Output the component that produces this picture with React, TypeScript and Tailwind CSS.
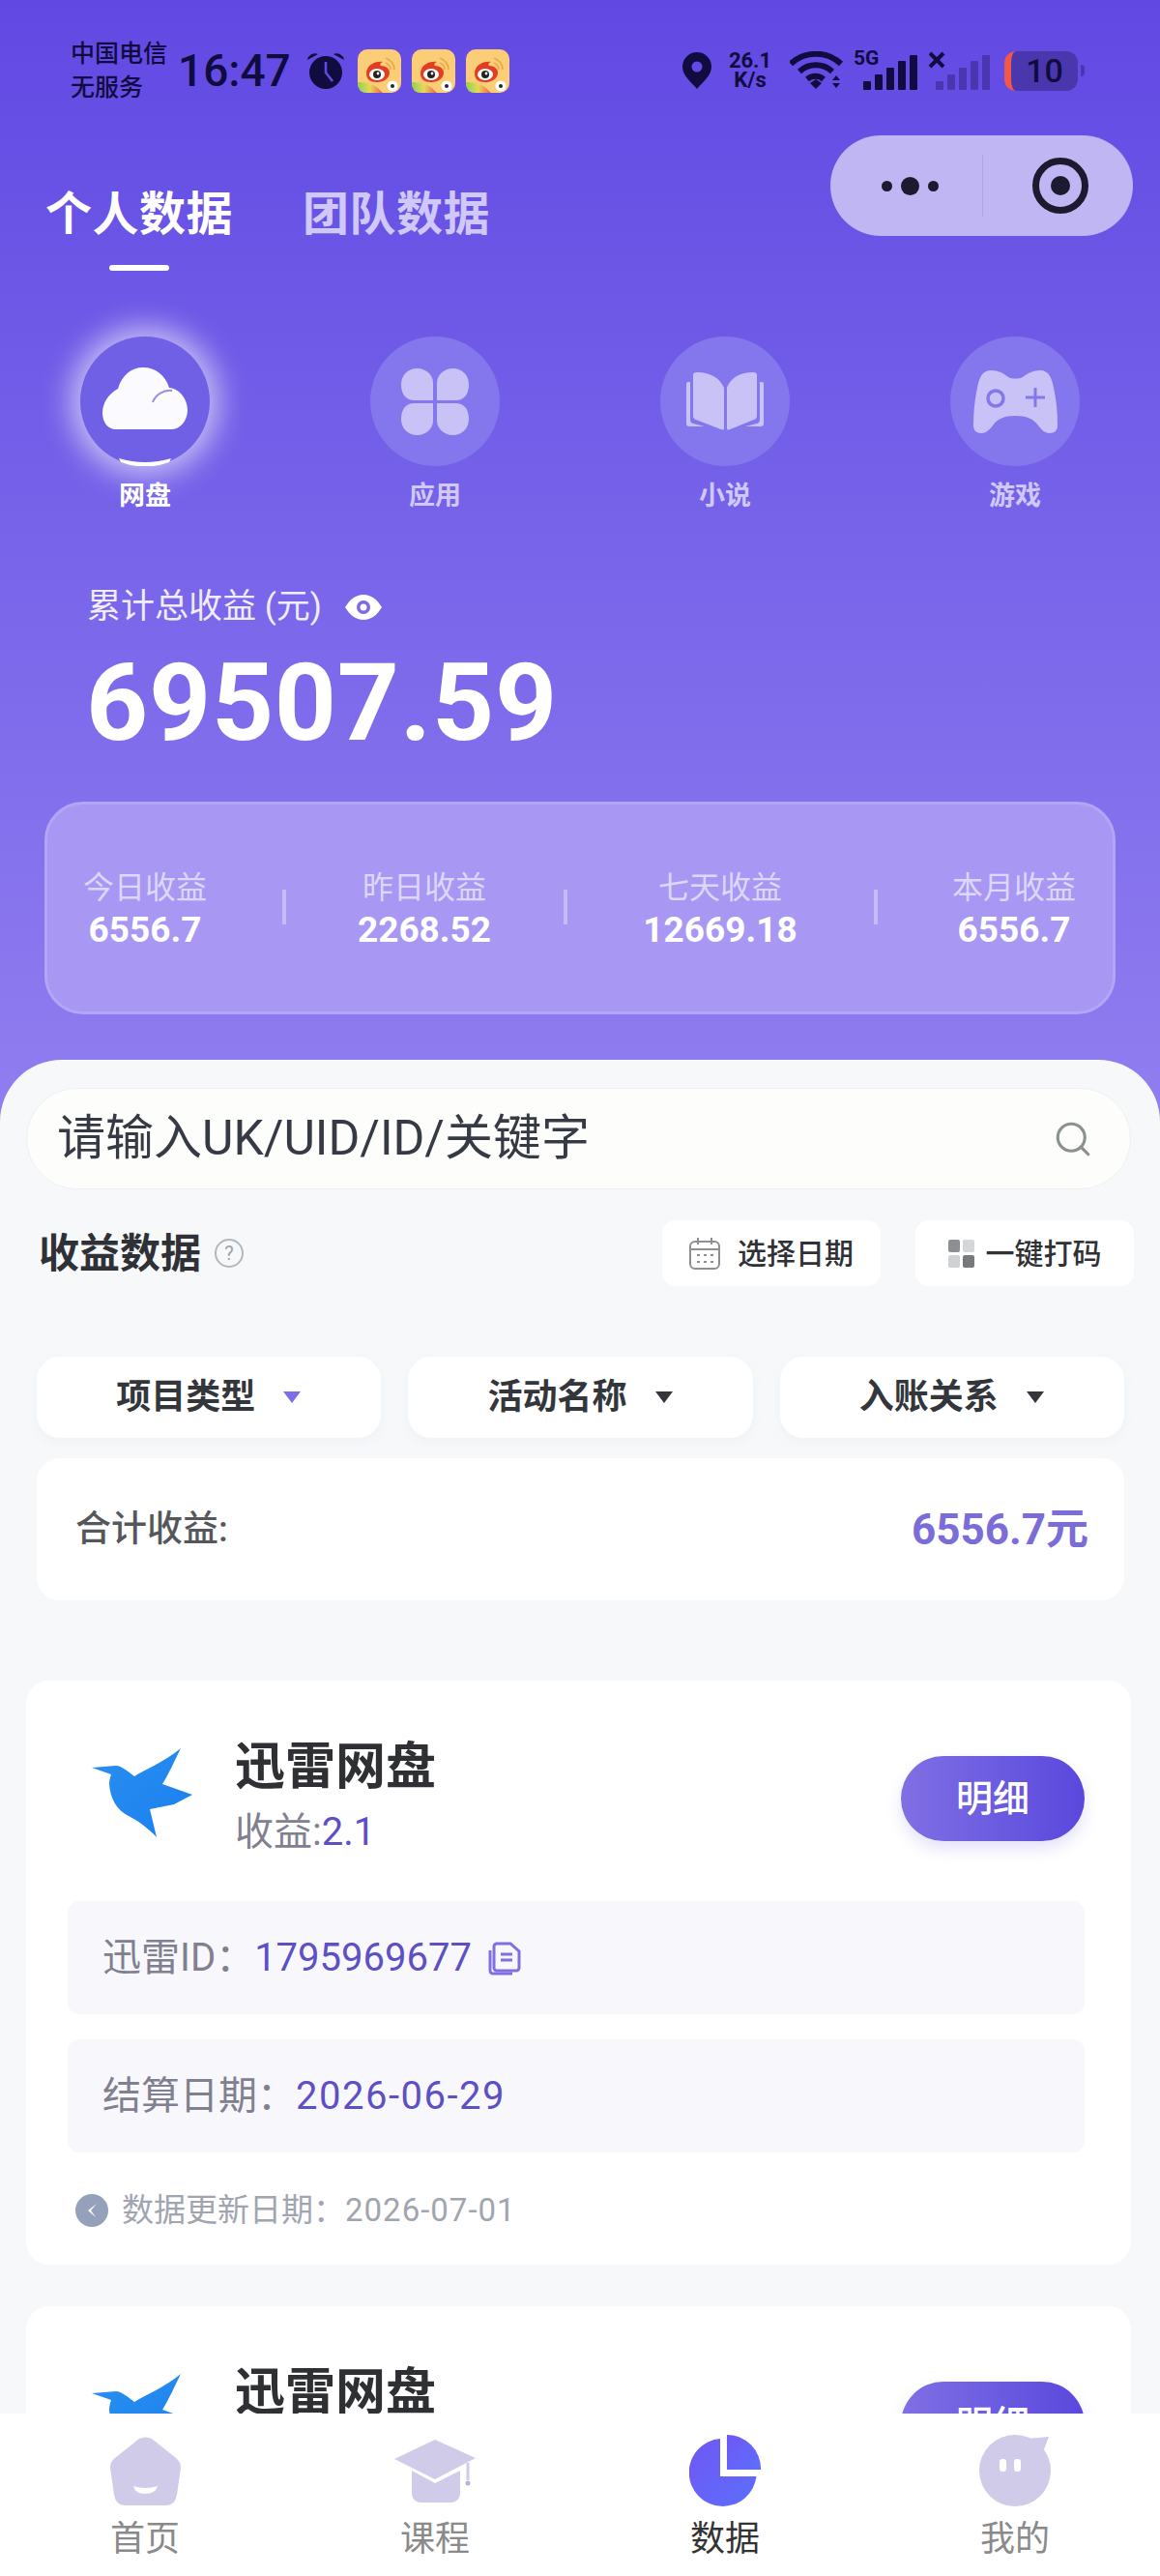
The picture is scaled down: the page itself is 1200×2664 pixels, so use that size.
import React from 'react';
import { Search } from 'lucide-react';

const Weibo = () => (
  <svg width="45" height="45" viewBox="0 0 45 45">
    <defs>
      <linearGradient id="wbRain" x1="0" y1="0" x2="1" y2="0">
        <stop offset="0" stopColor="#8fd14f" />
        <stop offset="0.5" stopColor="#e8d85a" />
        <stop offset="1" stopColor="#e8604c" />
      </linearGradient>
    </defs>
    <rect width="45" height="45" rx="10" fill="#fbcd76" />
    <path d="M0 34Q16 33 26 45H10Q0 45 0 35Z" fill="url(#wbRain)" />
    <path d="M29 9a13 13 0 0 1 9 12M29 14a8 8 0 0 1 5 7" stroke="#e8a94a" strokeWidth="1.6" fill="none" />
    <path d="M9 25C9 17 17 12 26 13c-3 1-3 3-2 4 5 0 9 3 9 7 0 6-6 10-13 10S9 31 9 25Z" fill="#e33d22" />
    <ellipse cx="20" cy="26" rx="8" ry="6" fill="#fff" />
    <circle cx="20" cy="26" r="4" fill="#222" />
    <circle cx="21" cy="25" r="1.4" fill="#fff" />
    <circle cx="36" cy="38" r="5.5" fill="#fff" />
    <circle cx="36" cy="38" r="2" fill="#223" />
  </svg>
);

const StatusBar = () => (
  <div className="flex h-[120px] items-center pl-[73px] pr-[78px] pt-[26px] text-[#100c40]">
    <div className="w-[111px] text-[25px] leading-[35px] font-medium">
      <div>中国电信</div>
      <div>无服务</div>
    </div>
    <div className="w-[132px] text-[46px] leading-none font-medium">16:47</div>
    <svg width="42" height="40" viewBox="0 0 42 40" className="mr-[12px]">
      <circle cx="21" cy="22" r="17" fill="#100c40" />
      <path d="M2 9a8 8 0 0 1 11-6ZM40 9a8 8 0 0 0-11-6Z" fill="#100c40" />
      <path d="M21 11v11l7 9" stroke="#6249e3" strokeWidth="2.6" fill="none" />
    </svg>
    <div className="flex gap-[11px]">
      <Weibo />
      <Weibo />
      <Weibo />
    </div>
    <div className="ml-auto flex items-center">
      <svg width="30" height="38" viewBox="0 0 30 38" className="mr-[14px]">
        <path d="M15 0a15 15 0 0 1 15 15c0 9-9 16-15 23C9 31 0 24 0 15A15 15 0 0 1 15 0Z" fill="#100c40" />
        <circle cx="15" cy="15" r="5.5" fill="#6249e3" />
      </svg>
      <div className="w-[52px] text-center text-[22px] leading-[20px] font-bold">
        <div>26.1</div>
        <div>K/s</div>
      </div>
      <svg width="56" height="40" viewBox="0 0 56 40" className="ml-[15px]">
        <path d="M1 13a38 38 0 0 1 52 0M10 21a25 25 0 0 1 34 0M18 29a13 13 0 0 1 17 0" stroke="#100c40" strokeWidth="6" fill="none" />
        <path d="M21 33l6-4 6 4-6 6Z" fill="#100c40" />
        <path d="M44 30l4-5 4 5ZM44 33l4 5 4-5Z" fill="#100c40" />
      </svg>
      <div className="relative ml-[10px] h-[42px] w-[70px]">
        <span className="absolute left-0 top-[-3px] text-[21px] leading-[22px] font-bold">5G</span>
        <svg width="70" height="42" viewBox="0 0 70 42" className="absolute inset-0">
          <rect x="10" y="32" width="8" height="9" rx="1" fill="#100c40" />
          <rect x="22" y="25" width="8" height="16" rx="1" fill="#100c40" />
          <rect x="34" y="18" width="8" height="23" rx="1" fill="#100c40" />
          <rect x="46" y="11" width="8" height="30" rx="1" fill="#100c40" />
          <rect x="58" y="5" width="8" height="36" rx="1" fill="#100c40" />
        </svg>
      </div>
      <svg width="64" height="42" viewBox="0 0 64 42" className="ml-[8px] mr-[14px]">
        <path d="M1 3l14 14M15 3L1 17" stroke="#100c40" strokeWidth="4" />
        <rect x="7" y="32" width="8" height="9" rx="1" fill="#4a36b0" />
        <rect x="19" y="25" width="8" height="16" rx="1" fill="#4a36b0" />
        <rect x="31" y="18" width="8" height="23" rx="1" fill="#4a36b0" />
        <rect x="43" y="11" width="8" height="30" rx="1" fill="#4a36b0" />
        <rect x="55" y="5" width="8" height="36" rx="1" fill="#4a36b0" />
      </svg>
      <div className="flex h-[41px] w-[76px] items-center justify-center rounded-[12px] border-l-[7px] border-[#f0564a] bg-[#4a36ad] text-[34px] leading-none font-medium">
        10
      </div>
      <div className="ml-[3px] h-[12px] w-[4px] rounded-r-full bg-[#4a36ad]" />
    </div>
  </div>
);

const CloudIcon = () => (
  <svg width="88" height="64" viewBox="0 0 88 64">
    <path d="M14 64C5 64 0 56 0 47C0 36 7 27 16 22C20 8 30 0 42 0C55 0 65 8 69 21C80 22 88 33 88 44C88 55 80 64 72 64Z" fill="#fafaff" />
    <path d="M52 36C55 28 63 23 72 24" stroke="#9a90e0" strokeWidth="2" fill="none" />
  </svg>
);

const CloverIcon = () => (
  <svg width="70" height="69" viewBox="0 0 70 69" fill="#c8c2f6">
    <path d="M33 33H14C5 33 0 27 0 16.5C0 7 7 0 16.5 0C26 0 33 7 33 15Z" />
    <path d="M37 33H56C65 33 70 27 70 16.5C70 7 63 0 53.5 0C44 0 37 7 37 15Z" />
    <path d="M33 36H14C5 36 0 42 0 52.5C0 62 7 69 16.5 69C26 69 33 62 33 54Z" />
    <path d="M37 36H56C65 36 70 42 70 52.5C70 62 63 69 53.5 69C44 69 37 62 37 54Z" />
  </svg>
);

const BookIcon = () => (
  <svg width="80" height="62" viewBox="0 0 80 62" fill="#c8c2f6">
    <path d="M7 4q0-3 4-3C24 1 34 6 39 17V59q0 2-2 1.5L10 50q-3-1-3-4Z" />
    <path d="M73 4q0-3-4-3C56 1 46 6 42 17V59q0 2 2 1.5L70 50q3-1 3-4Z" />
    <path d="M0 13a2 2 0 0 1 2-2h2V50q0 3 3 4l12 3H3q-3 0-3-3Z" />
    <path d="M80 13a2 2 0 0 0-2-2h-2V50q0 3-3 4l-12 3H77q3 0 3-3Z" />
  </svg>
);

const GameIcon = () => (
  <svg width="87" height="65" viewBox="0 0 87 65">
    <path
      d="M18 0C26 0 31 3 36 7C40 9 47 9 51 7C56 3 62 0 69 0C78 0 81 8 83 18C86 32 87 44 87 57C87 62 84 65 79 65C74 65 71 62 67 57C62 50 55 47 43 47C32 47 25 50 20 57C16 62 13 65 8 65C3 65 0 62 0 57C0 44 1 32 4 18C6 8 9 0 18 0Z"
      fill="#c8c2f6"
    />
    <circle cx="23" cy="29" r="8" fill="none" stroke="#8476ec" strokeWidth="3.5" />
    <path d="M64 18V38M54 28H74" stroke="#8476ec" strokeWidth="3" />
  </svg>
);

const categories = [
  { label: '网盘', icon: <CloudIcon />, active: true },
  { label: '应用', icon: <CloverIcon />, active: false },
  { label: '小说', icon: <BookIcon />, active: false },
  { label: '游戏', icon: <GameIcon />, active: false },
];

const stats = [
  { label: '今日收益', value: '6556.7', w: 'w-[136px]' },
  { label: '昨日收益', value: '2268.52', w: 'w-[140px]' },
  { label: '七天收益', value: '12669.18', w: 'w-[170px]' },
  { label: '本月收益', value: '6556.7', w: 'w-[136px]' },
];

const Header = () => (
  <div className="h-[1160px] bg-gradient-to-b from-[#6148e3] to-[#917ef0] text-white">
    <StatusBar />
    <div className="flex items-start justify-between pl-[47px] pr-[28px] pt-[20px]">
      <div className="flex gap-[72px] pt-[52px]">
        <div className="relative">
          <div className="text-[48px] leading-[60px] font-bold tracking-[0.5px]">个人数据</div>
          <div className="absolute left-[66px] top-[82px] h-[6px] w-[62px] rounded-full bg-white" />
        </div>
        <div className="text-[48px] leading-[60px] font-bold tracking-[0.5px] text-[#cfc8f8]">团队数据</div>
      </div>
      <div className="flex h-[104px] w-[313px] items-center rounded-full bg-[#bfb6f3]">
        <div className="flex w-[157px] items-center justify-center gap-[9px] pl-[8px]">
          <span className="h-[11px] w-[11px] rounded-full bg-[#1c1a2e]" />
          <span className="h-[19px] w-[19px] rounded-full bg-[#1c1a2e]" />
          <span className="h-[11px] w-[11px] rounded-full bg-[#1c1a2e]" />
        </div>
        <div className="h-[64px] w-px bg-[#aea4ea]" />
        <div className="flex flex-1 justify-center pl-[4px]">
          <div className="flex h-[58px] w-[58px] items-center justify-center rounded-full border-[7px] border-[#1c1a2e]">
            <span className="h-[20px] w-[20px] rounded-full bg-[#1c1a2e]" />
          </div>
        </div>
      </div>
    </div>
    <div className="mt-[96px] flex justify-between px-[83px]">
      {categories.map((c) => (
        <div key={c.label} className="flex w-[134px] flex-col items-center">
          <div
            className={
              c.active
                ? 'relative flex h-[134px] w-[134px] items-center justify-center rounded-full bg-[#7060e6] pb-[6px] shadow-[0_0_30px_10px_rgba(255,255,255,0.6)]'
                : 'flex h-[134px] w-[134px] items-center justify-center rounded-full bg-[#8476ec]'
            }
          >
            {c.icon}
            {c.active && (
              <svg width="134" height="134" viewBox="0 0 134 134" className="absolute inset-0">
                <path d="M40 126Q67 134 94 126L92 130Q67 139 42 130Z" fill="#fff" />
              </svg>
            )}
          </div>
          <div className={c.active ? 'mt-[13px] text-[27px] leading-[36px] font-bold text-white' : 'mt-[13px] text-[27px] leading-[36px] font-bold text-[#cfc8f8]'}>
            {c.label}
          </div>
        </div>
      ))}
    </div>
    <div className="mt-[75px] flex items-center pl-[90px] text-[35px] leading-[44px] text-[#f0edff]">
      累计总收益 (元)
      <svg width="38" height="26" viewBox="0 0 38 26" className="ml-[24px]">
        <path d="M0 13C5 5 11 0 19 0s14 5 19 13c-5 8-11 13-19 13S5 21 0 13Z" fill="#fff" />
        <circle cx="19" cy="13" r="7" fill="#7a67ea" />
        <circle cx="19" cy="13" r="3.5" fill="#fff" />
      </svg>
    </div>
    <div className="mt-[17px] pl-[89px] text-[112px] leading-[120px] font-bold tracking-[0.7px]">69507.59</div>
    <div className="mx-[46px] mt-[42px] flex h-[220px] items-start justify-between rounded-[40px] border-[3px] border-[#b3a6f6] bg-[#a898f3] pl-[33px] pr-[34px] pt-[64px]">
      {stats.map((s, i) => (
        <React.Fragment key={s.label}>
          {i > 0 && <div className="mt-[24px] h-[36px] w-[4px] bg-[#c4bcf6]" />}
          <div className={`${s.w} shrink-0 text-center`}>
            <div className="text-[32px] leading-[44px] text-[#dcd7fb]">{s.label}</div>
            <div className="text-[37px] leading-[44px] font-bold text-white">{s.value}</div>
          </div>
        </React.Fragment>
      ))}
    </div>
  </div>
);

const Bird = () => (
  <svg width="104" height="92" viewBox="0 0 104 92">
    <defs>
      <linearGradient id="birdFill" x1="0" y1="0" x2="1" y2="1">
        <stop offset="0" stopColor="#2a8ff0" />
        <stop offset="1" stopColor="#1a7fee" />
      </linearGradient>
    </defs>
    <path
      d="M0 20L25 18C30 18 35 22 44 29C55 22 75 14 92 0C86 12 80 26 73 37L104 48L85 58L60 63L67 92C58 82 46 74 38 70C26 64 19 52 18 37C18 33 19 30 20 27Z"
      fill="url(#birdFill)"
    />
  </svg>
);

const DetailButton = () => (
  <div className="flex h-[88px] w-[190px] shrink-0 items-center justify-center rounded-full bg-gradient-to-r from-[#806fe4] to-[#5a47dd] text-[38px] font-medium text-white shadow-[0_8px_16px_rgba(108,92,230,0.18)]">
    明细
  </div>
);

const CopyIcon = () => (
  <svg width="36" height="36" viewBox="0 0 36 36" fill="none" stroke="#7f6fe0" strokeWidth="3">
    <path d="M10 3h14l9 8v17a3 3 0 0 1-3 3H10a3 3 0 0 1-3-3V6a3 3 0 0 1 3-3Z" />
    <path d="M3 10v21a3 3 0 0 0 3 3h20" />
    <path d="M14 14h12M14 20h12" />
  </svg>
);

const FilterItem = ({ label, tone }: { label: string; tone: string }) => (
  <div className="flex h-[84px] flex-1 items-center justify-center gap-[28px] rounded-[24px] bg-white text-[36px] font-bold text-[#33363b] shadow-[0_4px_12px_rgba(200,210,225,0.12)]">
    {label}
    <svg width="20" height="14" viewBox="0 0 20 14">
      <path d="M1 1h18L10 13Z" fill={tone} />
    </svg>
  </div>
);

const ProjectCard = ({ rows = true }: { rows?: boolean }) => (
  <div className="rounded-[24px] bg-white pl-[43px] pr-[48px] pt-[58px] pb-[34px]">
    <div className="flex items-start">
      <div className="w-[25px]" />
      <div className="mt-[12px]">
        <Bird />
      </div>
      <div className="ml-[44px] flex-1">
        <div className="text-[52px] leading-[64px] font-bold text-[#2f3033]">迅雷网盘</div>
        <div className="mt-[11px] text-[40px] leading-[48px] text-[#808090]">
          收益:<span className="text-[#5d4fc4]">2.1</span>
        </div>
      </div>
      <div className="mt-[20px]">
        <DetailButton />
      </div>
    </div>
    {rows && (
      <>
        <div className="mt-[47px] flex h-[117px] items-center rounded-[12px] bg-[#f8f8fc] pl-[36px] text-[40px] text-[#808090]">
          迅雷ID：<span className="text-[#5d4fc4]">1795969677</span>
          <span className="ml-[16px]">
            <CopyIcon />
          </span>
        </div>
        <div className="mt-[26px] flex h-[117px] items-center rounded-[12px] bg-[#f8f8fc] pl-[36px] text-[40px] text-[#808090]">
          结算日期：<span className="tracking-[1.5px] text-[#5d4fc4]">2026-06-29</span>
        </div>
        <div className="mt-[38px] flex items-center pl-[8px] text-[33px] leading-[44px] text-[#a0a5b0]">
          <svg width="34" height="34" viewBox="0 0 34 34" className="mr-[14px]">
            <circle cx="17" cy="17" r="17" fill="#95a1ba" />
            <path d="M22 10L13 17l8 7-5-7Z" fill="#fff" />
          </svg>
          数据更新日期：<span className="tracking-[1px]">2026-07-01</span>
        </div>
      </>
    )}
  </div>
);

const HomeIcon = () => (
  <svg width="73" height="71" viewBox="0 0 73 71">
    <path d="M30 2Q36 -1 43 2L68 22Q73 26 73 32L69 60Q67 71 58 71H15Q6 71 4 60L0 32Q0 26 5 22Z" fill="#cfcbe8" />
    <path d="M24 51Q36 55 49 51Q47 59 36 59Q26 59 24 51Z" fill="#fff" />
  </svg>
);

const CourseIcon = () => (
  <svg width="84" height="65" viewBox="0 0 84 65">
    <path d="M42 0L84 19L42 41L0 20Z" fill="#cfcbe8" />
    <path d="M18 32L42 45L68 32V56a9 9 0 0 1-9 9H27a9 9 0 0 1-9-9Z" fill="#cfcbe8" />
    <path d="M76 24V42" stroke="#cfcbe8" strokeWidth="3" />
    <circle cx="76" cy="45" r="2.5" fill="#b9b5d8" />
  </svg>
);

const PieIcon = () => (
  <svg width="74" height="74" viewBox="0 0 74 74">
    <defs>
      <linearGradient id="pieFill" x1="0" y1="0" x2="1" y2="1">
        <stop offset="0" stopColor="#6f57f5" />
        <stop offset="1" stopColor="#5c6ffb" />
      </linearGradient>
    </defs>
    <path d="M32 4V43H69.5A35 35 0 1 1 32 4Z" fill="url(#pieFill)" />
    <path d="M39 0A35 35 0 0 1 74 36H39Z" fill="url(#pieFill)" />
  </svg>
);

const MineIcon = () => (
  <svg width="74" height="74" viewBox="0 0 74 74">
    <circle cx="37" cy="37" r="37" fill="#cfcbe8" />
    <path d="M50 4L72 2L65 20Z" fill="#cfcbe8" />
    <rect x="21" y="25" width="7" height="13" rx="3" fill="#fff" />
    <rect x="36" y="25" width="7" height="13" rx="3" fill="#fff" />
  </svg>
);

const navItems = [
  { label: '首页', icon: <HomeIcon />, active: false },
  { label: '课程', icon: <CourseIcon />, active: false },
  { label: '数据', icon: <PieIcon />, active: true },
  { label: '我的', icon: <MineIcon />, active: false },
];

const BottomNav = () => (
  <div className="absolute inset-x-0 bottom-0 flex h-[168px] justify-between bg-white px-[90px] pt-[22px]">
    {navItems.map((n) => (
      <div key={n.label} className="flex w-[120px] flex-col items-center">
        <div className="flex h-[74px] items-center">{n.icon}</div>
        <div className={n.active ? 'mt-[10px] text-[36px] leading-[48px] text-[#333]' : 'mt-[10px] text-[36px] leading-[48px] text-[#8a8a8a]'}>
          {n.label}
        </div>
      </div>
    ))}
  </div>
);

export default function App() {
  return (
    <div className="relative h-[2664px] w-[1200px] overflow-hidden bg-[#f6f8fa] font-['Roboto','Noto_Sans_CJK_SC',sans-serif]">
      <Header />
      <div className="relative -mt-[64px] h-[1400px] overflow-hidden rounded-t-[64px] bg-[#f6f8fa] pl-[27px] pr-[30px] pt-[29px]">
        <div className="flex h-[105px] items-center justify-between rounded-full border border-[#eceff2] bg-[#fdfefb] pl-[31px] pr-[38px] text-[50px] text-[#363a45]">
          请输入UK/UID/ID/关键字
          <Search size={42} strokeWidth={1.8} className="text-[#8a918f]" />
        </div>
        <div className="mt-[32px] flex h-[68px] items-center">
          <div className="pl-[13px] text-[42px] font-bold text-[#2f3136]">收益数据</div>
          <div className="ml-[14px] flex h-[30px] w-[30px] items-center justify-center rounded-full border-2 border-[#b5b8bb] text-[20px] text-[#a0a3a6]">?</div>
          <div className="ml-auto flex h-[68px] w-[226px] items-center justify-center gap-[18px] rounded-[14px] bg-white text-[30px] font-medium text-[#2f3136]">
            <svg width="32" height="34" viewBox="0 0 32 34" fill="none" stroke="#8d8f92" strokeWidth="2">
              <rect x="1" y="5" width="30" height="28" rx="5" />
              <path d="M1 13h30M9 1v7M23 1v7" />
              <path d="M8 19h3M15 19h3M22 19h3M8 26h3M15 26h3M22 26h3" />
            </svg>
            选择日期
          </div>
          <div className="ml-[36px] -mr-[3px] flex h-[68px] w-[226px] items-center justify-center gap-[12px] rounded-[14px] bg-white text-[30px] font-medium text-[#2f3136]">
            <div className="grid grid-cols-2 gap-[3px]">
              <span className="h-[13px] w-[12px] rounded-[2px] bg-[#8d8f92]" />
              <span className="h-[13px] w-[12px] rounded-[2px] bg-[#d5d6d8]" />
              <span className="h-[13px] w-[12px] rounded-[2px] bg-[#d0d1d3]" />
              <span className="h-[13px] w-[12px] rounded-[2px] bg-[#77797c]" />
            </div>
            一键打码
          </div>
        </div>
        <div className="mt-[73px] flex gap-[28px] pl-[11px] pr-[7px]">
          <FilterItem label="项目类型" tone="#7b6ee8" />
          <FilterItem label="活动名称" tone="#33363b" />
          <FilterItem label="入账关系" tone="#33363b" />
        </div>
        <div className="ml-[11px] mr-[7px] mt-[21px] flex h-[147px] items-center justify-between rounded-[24px] bg-white pl-[40px] pr-[37px]">
          <span className="text-[37px] font-medium text-[#55575b]">合计收益:</span>
          <span className="text-[44px] font-bold text-[#7a6cd9]">6556.7元</span>
        </div>
        <div className="mt-[83px] flex flex-col gap-[43px]">
          <ProjectCard />
          <ProjectCard rows={false} />
        </div>
      </div>
      <BottomNav />
    </div>
  );
}
